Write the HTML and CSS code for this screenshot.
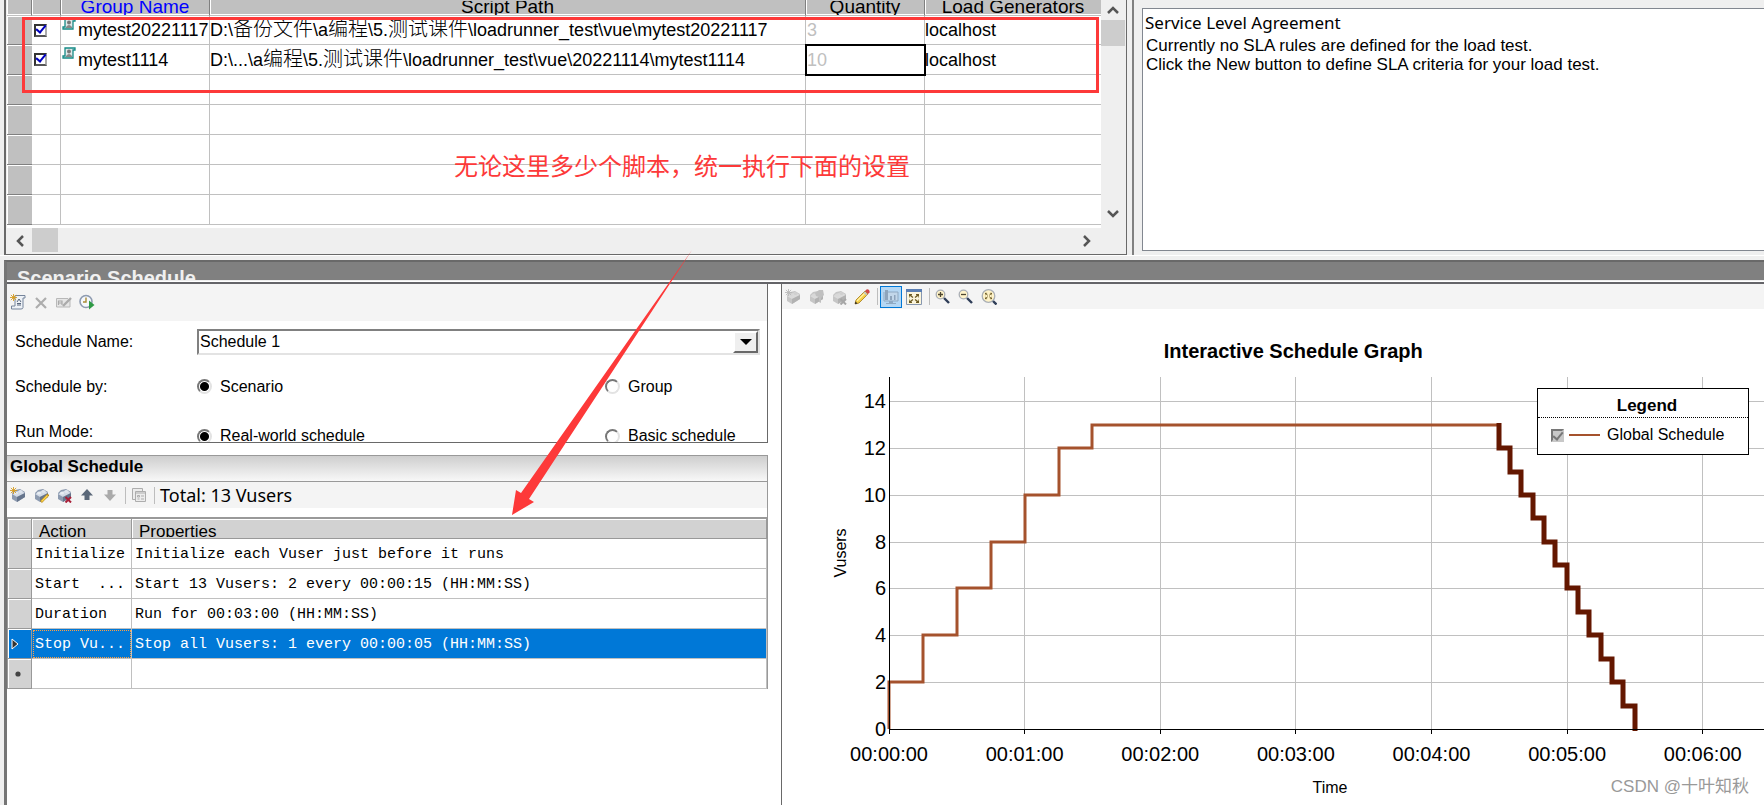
FILE: index.html
```html
<!DOCTYPE html>
<html lang="en">
<head>
<meta charset="utf-8">
<title>Scenario Schedule</title>
<link rel="stylesheet" href="styles.css">
</head>
<body>
<svg class="defs" width="0" height="0" aria-hidden="true">
  <defs>
    <symbol id="brick" viewBox="0 0 16 16">
      <path d="M2 6L5 3L10 2L15 5V10L7 15L2 12Z" fill="#8d9bb0"/>
      <path d="M2 7 L10 3 L15 6 L7 10Z" fill="#d3dbe6"/>
      <path d="M7 10 L15 6 V10 L7 15Z" fill="#66758c"/>
      <ellipse cx="6" cy="6" rx="2" ry="1.5" fill="#e8edf3"/>
      <ellipse cx="10.500" cy="4.500" rx="2" ry="1.500" fill="#dfe5ee"/>
    </symbol>
    <symbol id="brick-off" viewBox="0 0 16 16">
      <path d="M2 6L5 3L10 2L15 5V10L7 15L2 12Z" fill="#c6c6c6"/>
      <path d="M2 7 L10 3 L15 6 L7 10Z" fill="#dadada"/>
      <path d="M7 10 L15 6 V10 L7 15Z" fill="#b2b2b2"/>
      <ellipse cx="6" cy="6" rx="2" ry="1.500" fill="#d8d8d8"/>
      <ellipse cx="10.500" cy="4.500" rx="2" ry="1.500" fill="#d0d0d0"/>
    </symbol>
    <symbol id="spark" viewBox="0 0 8 8">
      <path d="M4 0V8M0 4H8M1 1L7 7M7 1L1 7" stroke="currentColor" stroke-width="1"/>
    </symbol>
    <symbol id="scroll" viewBox="0 0 14 13">
      <path d="M3 1H13V3H11V11H1V9H3Z" fill="#dfe9e9" stroke="#158a86" stroke-width="1.300"/>
      <circle cx="7" cy="4.500" r="2" fill="#777"/><path d="M4 9Q7 5 10 9V10H4Z" fill="#888"/>
    </symbol>
    <symbol id="lens" viewBox="0 0 16 16">
      <path d="M9 9L14 14" stroke="#2e3d57" stroke-width="2.400"/>
      <circle cx="5.500" cy="5.500" r="4.300" fill="#fff3c9" stroke="#a9aeb5" stroke-width="1.300"/>
    </symbol>
    <symbol id="corners" viewBox="0 0 10 8">
      <path d="M0 3V0H3M7 0H10V3M10 5V8H7M3 8H0V5M0 0L4 3M10 0L6 3M10 8L6 5M0 8L4 5" fill="none" stroke="#6c5a22" stroke-width="1.300"/>
    </symbol>
  </defs>
</svg>

<main class="app">
  <section class="top">
    <div class="groups">
      <div class="groups-body">
        <table class="grid">
          <colgroup><col class="c-row"><col class="c-check"><col class="c-name"><col><col class="c-qty"><col class="c-load"></colgroup>
          <thead>
            <tr><th></th><th></th><th class="blue"><div>Group Name</div></th><th><div>Script Path</div></th><th><div>Quantity</div></th><th><div>Load Generators</div></th></tr>
          </thead>
          <tbody>
            <tr class="first"><th></th><td><input type="checkbox" checked aria-label="Enable mytest20221117"></td><td><div class="name"><svg><use href="#scroll"/></svg>mytest20221117</div></td><td>D:\<span class="cjk">备份文件</span>\a<span class="cjk">编程</span>\5.<span class="cjk">测试课件</span>\loadrunner_test\vue\mytest20221117</td><td class="dim">3</td><td>localhost</td></tr>
            <tr><th></th><td><input type="checkbox" checked aria-label="Enable mytest1114"></td><td><div class="name"><svg><use href="#scroll"/></svg>mytest1114</div></td><td>D:\...\a<span class="cjk">编程</span>\5.<span class="cjk">测试课件</span>\loadrunner_test\vue\20221114\mytest1114</td><td class="dim current">10</td><td>localhost</td></tr>
            <tr><th></th><td></td><td></td><td></td><td></td><td></td></tr>
            <tr><th></th><td></td><td></td><td></td><td></td><td></td></tr>
            <tr><th></th><td></td><td></td><td></td><td></td><td></td></tr>
            <tr><th></th><td></td><td></td><td></td><td></td><td></td></tr>
            <tr><th></th><td></td><td></td><td></td><td></td><td></td></tr>
          </tbody>
        </table>
        <div class="vscroll">
          <button aria-label="Scroll up"><svg viewBox="0 0 12 8"><path d="M1 7L6 2L11 7"/></svg></button>
          <span class="thumb"></span>
          <button aria-label="Scroll down"><svg viewBox="0 0 12 8"><path d="M1 1L6 6L11 1"/></svg></button>
        </div>
      </div>
      <div class="hscroll">
        <button aria-label="Scroll left"><svg viewBox="0 0 8 12"><path d="M7 1L2 6L7 11"/></svg></button>
        <span class="thumb"></span>
        <button aria-label="Scroll right"><svg viewBox="0 0 8 12"><path d="M1 1L6 6L1 11"/></svg></button>
      </div>
      <div class="mark"></div>
      <p class="note">无论这里多少个脚本，统一执行下面的设置</p>
    </div>
    <div class="sla">
      <div class="sla-box">
        <h2>Service Level Agreement</h2>
        <p>Currently no SLA rules are defined for the load test.</p>
        <p>Click the New button to define SLA criteria for your load test.</p>
      </div>
    </div>
  </section>

  <section class="schedule">
    <h1 class="bar">Scenario Schedule</h1>
    <div class="panes">
      <div class="left">
        <div class="settings">
          <div class="tools tall">
            <button aria-label="New schedule"><svg viewBox="0 0 16 16"><path d="M5 1.500H15V4H13V13.500Q13 15 11 15H1.500V12H5Z" fill="#eef2f7" stroke="#75849b"/><path d="M7 8L9 5L11 8M7 11H11M7 9.500H11" fill="none" stroke="#56657c"/><use href="#spark" x="0" y="0" width="7" height="7" color="#d59a1d"/></svg></button>
            <button aria-label="Delete schedule"><svg viewBox="0 0 16 16"><path d="M3 4L13 14M13 4L3 14" stroke="#adadad" stroke-width="2.200"/></svg></button>
            <button aria-label="Rename schedule"><svg viewBox="0 0 16 16"><path d="M14 5V13H.500V4.500H12" fill="#e6e6e6" stroke="#b8b8b8"/><path d="M2.500 11V7H6V11M2.500 9H6" fill="none" stroke="#aaa" stroke-width="1.200"/><path d="M7 12L15 4" stroke="#ababab" stroke-width="2.400"/></svg></button>
            <button aria-label="Start time"><svg viewBox="0 0 16 16"><circle cx="7" cy="7.500" r="6" fill="#f5f8fc" stroke="#8e9bb0" stroke-width="1.600"/><path d="M7 3.500V8H4" fill="none" stroke="#a98a35" stroke-width="1.400"/><path d="M10 6.500L15.500 11L10 15.500Z" fill="#2f9a45"/></svg></button>
          </div>
          <div class="form">
            <label for="sname">Schedule Name:</label>
            <div class="combo"><select id="sname"><option>Schedule 1</option></select><span class="drop"></span></div>
            <span id="by">Schedule by:</span>
            <label class="radio"><input type="radio" name="by" checked>Scenario</label>
            <label class="radio"><input type="radio" name="by">Group</label>
            <span class="mode" id="mode">Run Mode:</span>
            <label class="radio low"><input type="radio" name="mode" checked>Real-world schedule</label>
            <label class="radio low"><input type="radio" name="mode">Basic schedule</label>
          </div>
        </div>
        <div class="global">
          <h2>Global Schedule</h2>
          <div class="tools">
            <button aria-label="Add action"><svg viewBox="0 0 16 16"><use href="#brick"/><use href="#spark" width="7" height="7" color="#d59a1d"/></svg></button>
            <button aria-label="Edit action"><svg viewBox="0 0 16 16"><use href="#brick"/><path d="M8 15L15.500 7.500" stroke="#b88b20" stroke-width="2.600"/><path d="M8.500 14.500L14.500 8.500" stroke="#ffd84d" stroke-width="1.400"/></svg></button>
            <button aria-label="Delete action"><svg viewBox="0 0 16 16"><use href="#brick"/><path d="M9.500 10L15 15.500M15 10L9.500 15.500" stroke="#a81f38" stroke-width="2"/></svg></button>
            <button aria-label="Move up"><svg viewBox="0 0 16 16"><path d="M8 2L14 8.500H10.500V13H5.500V8.500H2Z" fill="#5b6879"/></svg></button>
            <button aria-label="Move down"><svg viewBox="0 0 16 16"><path d="M8 14L14 7.500H10.500V3H5.500V7.500H2Z" fill="#aaa"/></svg></button>
            <i class="sep"></i>
            <button aria-label="Copy"><svg viewBox="0 0 16 16" fill="#ececec" stroke="#adadad"><path d="M1.500 1.500H11.500V12.500H1.500Z"/><path d="M4.500 4.500H14.500V14.500H4.500Z"/><path d="M4.500 6H14.500M6.500 8.500H8.500V10H6.500ZM10 9H13M6.500 12H8.500M10 12H13"/></svg></button>
            <i class="sep"></i>
            <output>Total: 13 Vusers</output>
          </div>
          <table class="actions">
            <colgroup><col class="a-row"><col class="a-act"><col></colgroup>
            <thead><tr><th></th><th><div>Action</div></th><th><div>Properties</div></th></tr></thead>
            <tbody>
              <tr><th></th><td>Initialize</td><td>Initialize each Vuser just before it runs</td></tr>
              <tr><th></th><td>Start &nbsp;...</td><td>Start 13 Vusers: 2 every 00:00:15 (HH:MM:SS)</td></tr>
              <tr><th></th><td>Duration</td><td>Run for 00:03:00 (HH:MM:SS)</td></tr>
              <tr class="selected"><th><svg viewBox="0 0 8 12"><path d="M1 1L7 6L1 11Z" fill="#333" stroke="#fff"/></svg></th><td>Stop Vu...</td><td>Stop all Vusers: 1 every 00:00:05 (HH:MM:SS)</td></tr>
              <tr><th><svg class="dot" viewBox="0 0 6 6"><circle cx="3" cy="3" r="2.600" fill="#444"/></svg></th><td></td><td></td></tr>
            </tbody>
          </table>
        </div>
      </div>

      <div class="graph">
        <div class="tools">
          <button aria-label="Add" disabled><svg viewBox="0 0 16 16"><use href="#brick-off"/><use href="#spark" width="7" height="7" color="#b9b9b9"/></svg></button>
          <button aria-label="Split" disabled><svg viewBox="0 0 16 16"><use href="#brick-off"/><path d="M7 4L11 1H15L16 6L13 9V14L11 13V8L8 7Z" fill="#c0c0c0"/></svg></button>
          <button aria-label="Delete" disabled><svg viewBox="0 0 16 16"><use href="#brick-off"/><path d="M9.500 10L15 15.500M15 10L9.500 15.500" stroke="#a6a6a6" stroke-width="2"/></svg></button>
          <button aria-label="Edit mode"><svg viewBox="0 0 16 16"><path d="M1 15L2 11L11 2L14 5L5 14Z" fill="#f5cf45" stroke="#a47a1c" stroke-width=".8"/><path d="M3 12L11.500 3.500" stroke="#fff2a8" stroke-width="1.300"/><path d="M11 2L12.500 .500Q14 0 15 1Q16 2 15.500 3.500L14 5Z" fill="#d04848"/><path d="M10 3L13 6" stroke="#b9c1cb" stroke-width="1.500"/><path d="M1 15L1.500 12.500L3.500 14.500Z" fill="#222"/></svg></button>
          <i class="sep"></i>
          <button class="on" aria-label="Show graph"><svg viewBox="0 0 16 16"><path d="M4 3H15V12H1V3" fill="#c2d7ea" stroke="#8fa9c2"/><path d="M2 1H5V11H2ZM7 7H9V11H7ZM11 6H12.500V11H11Z" fill="#8ea4bb"/><path d="M6 12H10V14H13V15H3V14H6Z" fill="#8fa9c2"/></svg></button>
          <button aria-label="Full view"><svg viewBox="0 0 16 16"><path d="M.500 .500H15.500V15.500H.500Z" fill="#fbf5dc" stroke="#8797b0"/><path d="M0 0H16V3H0Z" fill="#5a7eb3"/><use href="#corners" x="3" y="5" width="10" height="9"/></svg></button>
          <i class="sep"></i>
          <button aria-label="Zoom in"><svg viewBox="0 0 16 16"><use href="#lens"/><path d="M5.500 3V8M3 5.500H8" stroke="#4d4632" stroke-width="1.300"/></svg></button>
          <button aria-label="Zoom out"><svg viewBox="0 0 16 16"><use href="#lens"/><path d="M3 5.500H8" stroke="#4d4632" stroke-width="1.300"/></svg></button>
          <button aria-label="Zoom reset"><svg viewBox="0 0 16 16"><path d="M11 11L15.500 15.500" stroke="#2e3d57" stroke-width="2.400"/><circle cx="7.500" cy="7" r="6.300" fill="#fff3c9" stroke="#a9aeb5" stroke-width="1.300"/><use href="#corners" x="4" y="3.500" width="7" height="7"/></svg></button>
        </div>
        <div class="chart">
          <svg class="plot" role="img" aria-label="Interactive Schedule Graph">
            <text class="title" x="46.2%" y="-19">Interactive Schedule Graph</text>
            <g class="lines">
              <line x1="0" x2="100%" y1="24" y2="24"/><line x1="0" x2="100%" y1="71" y2="71"/><line x1="0" x2="100%" y1="118" y2="118"/><line x1="0" x2="100%" y1="165" y2="165"/><line x1="0" x2="100%" y1="211" y2="211"/><line x1="0" x2="100%" y1="258" y2="258"/><line x1="0" x2="100%" y1="305" y2="305"/>
              <line x1="15.5%" x2="15.5%" y1="0" y2="352"/><line x1="31%" x2="31%" y1="0" y2="352"/><line x1="46.5%" x2="46.5%" y1="0" y2="352"/><line x1="62%" x2="62%" y1="0" y2="352"/><line x1="77.5%" x2="77.5%" y1="0" y2="352"/><line x1="93%" x2="93%" y1="0" y2="352"/>
            </g>
            <svg class="series" viewBox="0 0 875 352" preserveAspectRatio="none" width="100%" height="352">
              <path class="run" d="M0 352V305H34V258H68V211H102V165H136V118H170V71H203V48H610"/>
              <path class="stop" d="M610 46V71H621V95H632V118H644V141H655V165H666V188H678V211H689V235H700V258H712V282H723V305H734V329H746V354"/>
            </svg>
            <g class="axis">
              <line x1="0" x2="100%" y1="352" y2="352"/><line x1="0" x2="0" y1="0" y2="357"/>
              <line x1="15.5%" x2="15.5%" y1="352" y2="357"/><line x1="31%" x2="31%" y1="352" y2="357"/><line x1="46.5%" x2="46.5%" y1="352" y2="357"/><line x1="62%" x2="62%" y1="352" y2="357"/><line x1="77.5%" x2="77.5%" y1="352" y2="357"/><line x1="93%" x2="93%" y1="352" y2="357"/>
            </g>
            <g class="ylab"><text x="-3" y="31">14</text><text x="-3" y="78">12</text><text x="-3" y="125">10</text><text x="-3" y="172">8</text><text x="-3" y="218">6</text><text x="-3" y="265">4</text><text x="-3" y="312">2</text><text x="-3" y="359">0</text></g>
            <g class="xlab"><text x="0" y="384">00:00:00</text><text x="15.5%" y="384">00:01:00</text><text x="31%" y="384">00:02:00</text><text x="46.5%" y="384">00:03:00</text><text x="62%" y="384">00:04:00</text><text x="77.5%" y="384">00:05:00</text><text x="93%" y="384">00:06:00</text></g>
            <text class="small" x="50.4%" y="416">Time</text>
            <text class="small" transform="translate(-43 176) rotate(-90)">Vusers</text>
          </svg>
          <div class="legend">
            <h3>Legend</h3>
            <label><input type="checkbox" checked disabled><i></i>Global Schedule</label>
          </div>
          <span class="credit">CSDN @十叶知秋</span>
        </div>
      </div>
    </div>
  </section>
  <svg class="arrow" viewBox="0 0 200 270" aria-hidden="true"><path d="M192 0L29 249L34 252L12 265L16 240L21 243Z"/></svg>
</main>
</body>
</html>
```

FILE: styles.css
```css
* { box-sizing: border-box; }
body { margin: 0; background: #efefef; color: #000; font: 16px/20px "Liberation Sans", Arial, "Noto Sans CJK SC", sans-serif; }
h1, h2, h3, p { margin: 0; }
button { padding: 0; border: 0; background: none; display: grid; place-items: center; }
.defs { position: absolute; }
.app { position: relative; min-height: 100vh; display: flex; flex-direction: column; overflow: hidden; }

/* top row */
.top { display: grid; grid-template-columns: minmax(0, 1123fr) minmax(0, 632fr); gap: 5px; padding-left: 4px; border-bottom: 1px solid #fff; }
.groups { position: relative; border: 2px solid #696969; border-width: 0 1px 1px 2px; padding-left: 1px; padding-right: 1px; }
.groups-body { display: grid; grid-template-columns: minmax(0, 1fr) 24px; height: 228px; background: #fff; }
.grid { width: 100%; height: 225px; table-layout: fixed; border-spacing: 0; font-size: 18px; line-height: 24px; white-space: nowrap; }
.c-row { width: 25px; }
.c-check { width: 29px; }
.c-name { width: 149px; }
.c-qty { width: 119px; }
.c-load { width: 176px; }
.grid th { padding: 0; background: #c0c0c0; font-weight: 400; }
.grid thead th { height: 16px; border-bottom: 1px solid #c0c0c0; border-right: 1px solid #808080; box-shadow: inset 1px 0 #fff, inset 0 -1px #fff; }
.grid thead th:last-child { border-right: 0; }
.grid thead div { height: 14px; overflow: hidden; font-size: 19px; line-height: 11px; }
.grid .blue { color: #00f; }
.grid td { height: 30px; padding: 0; overflow: hidden; border-right: 1px solid #c0c0c0; border-bottom: 1px solid #c0c0c0; }
.grid td:last-child { border-right: 0; }
.grid tbody th { height: 30px; border-bottom: 1px solid #808080; box-shadow: inset 1px 1px #fff; }
.grid .first td, .grid .first th { height: 29px; }
.cjk { font-family: "Noto Sans CJK SC", sans-serif; font-size: 20px; font-weight: 300; line-height: 20px; }
.name { display: flex; align-items: center; }
.name svg { width: 14px; height: 13px; margin: 0 2px 12px 1px; }
.grid .dim { padding-left: 1px; color: #c0c0c0; }
.grid .current { outline: 2px solid #000; outline-offset: -1px; }
.grid input { appearance: none; display: block; width: 13px; height: 13px; margin: 0 0 0 2px; border: 2px solid #333; border-right-color: #aaa; border-bottom-color: #555; background: #fff; position: relative; }
.grid input::after { content: ""; position: absolute; left: 2px; top: -3px; width: 4px; height: 8px; border: solid #0000c0; border-width: 0 2px 2px 0; rotate: 40deg; }
.vscroll, .hscroll { display: flex; background: #efefef; }
.vscroll { flex-direction: column; }
.vscroll button { height: 20px; }
.vscroll button:last-child { margin: auto 0 4px; }
.vscroll svg { width: 12px; height: 8px; }
.hscroll svg { width: 8px; height: 12px; }
.vscroll path, .hscroll path { fill: none; stroke: #555; stroke-width: 2.5; }
.thumb { background: #cdcdcd; }
.vscroll .thumb { height: 26px; }
.hscroll { height: 25px; }
.hscroll button { width: 25px; }
.hscroll .thumb { width: 26px; height: 24px; }
.hscroll button:last-child { margin: 0 26px 0 auto; }
.mark { position: absolute; left: 16px; top: 17px; right: 27px; height: 76px; border: 3px solid #fd3939; }
.note { position: absolute; left: 448px; top: 149px; font: 24px/32px "Noto Sans CJK SC", sans-serif; color: #fd3939; white-space: nowrap; }
.sla { border-left: 2px solid #808080; padding: 8px 0 4px 8px; }
.sla-box { height: 243px; padding: 3px 2px; background: #fff; border: 1px solid #828790; border-right: 0; font-size: 17px; line-height: 19px; }
.sla-box p { padding-left: 1px; }
.sla-box h2 { font: 17px/22px "Noto Sans", sans-serif; padding-bottom: 2px; }

/* schedule section */
.schedule { flex: 1; display: flex; flex-direction: column; margin: 4px 0 0 4px; border: solid #696969; border-width: 2px 0 0 3px; border-left-color: #757575; }
.bar { height: 18px; overflow: hidden; padding: 4px 10px 0; background: #808080; color: #f0f0f0; font-size: 20px; line-height: 24px; }
.panes { flex: 1; display: grid; grid-template-columns: minmax(0, 761fr) minmax(0, 983fr); gap: 13px; background: #fff; border-top: 2px solid #646468; box-shadow: 0 -1px #fff; margin-top: 2px; }
.tools { display: flex; align-items: center; gap: 1px; height: 26px; background: #f4f4f4; }
.tools button { width: 22px; height: 22px; }
.tools svg { width: 16px; height: 16px; }
.tools.tall { height: 37px; padding-bottom: 2px; }
.sep { width: 1px; height: 17px; margin: 0 1px 0 3px; background: #bdbdbd; }
.tools .on { background: #b5d7f3; border: 1px solid #0078d7; }
.settings { height: 159px; overflow: hidden; border: solid #696969; border-width: 0 1px 1px 0; }
.form { display: grid; grid-template-columns: 182px minmax(0, 408fr) minmax(0, 162fr); grid-template-rows: 41px 49px 42px; align-items: center; padding-left: 8px; }
.combo { grid-column: span 2; display: flex; height: 26px; margin-right: 7px; border: 2px solid #696969; border-color: #808080 #e3e3e3 #e3e3e3 #808080; }
.combo select { flex: 1; appearance: none; border: 0; padding: 0 1px; background: #fff; color: #000; font: inherit; }
.drop { display: grid; place-items: center; width: 25px; background: #efefef; border: 2px solid #696969; border-top-color: #fff; border-left-color: #fff; }
.drop::after { content: ""; border: 6px solid transparent; border-top-color: #000; border-bottom: 0; }
.radio { display: flex; align-items: center; gap: 8px; }
.radio input { appearance: none; width: 15px; height: 15px; margin: 0; border: 2px solid #777; border-right-color: #e3e3e3; border-bottom-color: #e3e3e3; border-radius: 50%; background: #fff; }
.radio input:checked { background: radial-gradient(circle, #000 4px, #fff 5px); }
.radio.low { padding-top: 8px; }
.global { margin-top: 12px; border: solid #999; border-width: 1px 1px 0 0; }
.global h2 { height: 26px; padding-left: 3px; border-bottom: 1px solid #999; background: linear-gradient(#cecece, #f8f8f8); font-size: 17px; line-height: 22px; }
.global output { padding-left: 3px; font: 18px/24px "Noto Sans", sans-serif; }
.actions { width: 100%; margin-top: 9px; table-layout: fixed; border-spacing: 0; border-top: 2px solid #999; border-left: 1px solid #999; font: 15px/20px "Liberation Mono", monospace; white-space: nowrap; }
.a-row { width: 24px; }
.a-act { width: 100px; }
.actions th { padding: 0; background: #d2d2d2; border-right: 1px solid #999; border-bottom: 1px solid #999; box-shadow: inset 1px 1px #fff; }
.actions thead th { height: 20px; vertical-align: top; text-align: left; font: 17px/20px "Liberation Sans", Arial, sans-serif; }
.actions thead div { height: 18px; overflow: hidden; padding: 3px 0 0 7px; }
.actions tbody th, .actions td { height: 30px; }
.actions td { padding: 2px 0 0 3px; border-right: 1px solid #c0c0c0; border-bottom: 1px solid #c0c0c0; background: #fff; }
.actions svg { display: block; width: 8px; height: 12px; margin-left: 3px; }
.actions .dot { width: 6px; height: 6px; margin-left: 7px; }
.actions .selected th, .actions .selected td { background: #0078d7; color: #fff; }
.actions .selected td:nth-child(2) { outline: 1px dotted #ffa040; outline-offset: -2px; }

/* graph */
.graph { border-left: 1px solid #696969; display: flex; flex-direction: column; }
.graph .tools { height: 25px; }
.chart { position: relative; flex: 1; min-height: 496px; padding: 68px 0 0 107px; }
.plot { display: block; width: 100%; height: 352px; overflow: visible; }
.series { overflow: visible; }
.plot text { text-anchor: middle; font-size: 20px; }
.plot .title { font-weight: 700; }
.plot .small { font-size: 16px; }
.plot .ylab text { text-anchor: end; }
.lines { stroke: #c0c0c0; shape-rendering: crispEdges; }
.axis { stroke: #000; shape-rendering: crispEdges; }
.series path { fill: none; vector-effect: non-scaling-stroke; }
.run { stroke: #a5522d; stroke-width: 3px; }
.stop { stroke: #641700; stroke-width: 5px; }
.legend { position: absolute; top: 79px; right: 15px; width: 212px; height: 67px; padding-top: 7px; background: #fff; border: 1px solid #000; }
.legend h3 { padding: 0 0 1px 8px; border-bottom: 1px dotted #000; text-align: center; font-size: 17px; line-height: 20px; }
.legend label { display: flex; align-items: center; padding: 7px 0 0 13px; }
.legend input { appearance: none; width: 13px; height: 13px; margin: 0 5px 0 0; border: 2px solid #777; border-right-color: #c8c8c8; border-bottom-color: #c8c8c8; background: #c8c8c8; position: relative; }
.legend input::after { content: ""; position: absolute; left: 2px; top: -1px; width: 4px; height: 8px; border: solid #777; border-width: 0 2px 2px 0; rotate: 40deg; }
.legend i { width: 31px; height: 2px; margin-right: 7px; background: #a5522d; }
.credit { position: absolute; right: 15px; bottom: 6px; color: #999; font: 17px/24px "Liberation Sans", "Noto Sans CJK SC", sans-serif; }
.arrow { position: absolute; left: 500px; top: 250px; width: 200px; height: 270px; fill: #fd3939; pointer-events: none; }
```
